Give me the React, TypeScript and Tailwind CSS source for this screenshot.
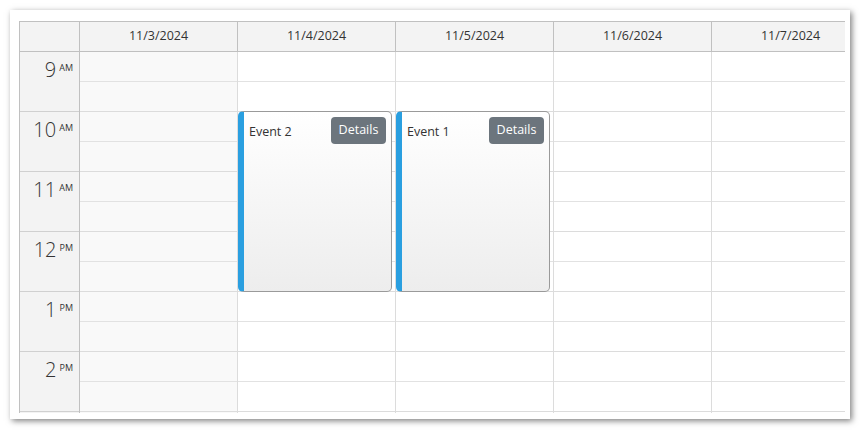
import React from "react";

type Day = { label: string; weekend?: boolean };
type CalEvent = { day: number; text: string; start: number; hours: number };

const days: Day[] = [
  { label: "11/3/2024", weekend: true },
  { label: "11/4/2024" },
  { label: "11/5/2024" },
  { label: "11/6/2024" },
  { label: "11/7/2024" },
];

// last row is only partly visible (cut by the scroll area), so no label there
const hours = [
  { h: "9", p: "AM" },
  { h: "10", p: "AM" },
  { h: "11", p: "AM" },
  { h: "12", p: "PM" },
  { h: "1", p: "PM" },
  { h: "2", p: "PM" },
  { h: "", p: "" },
];

const events: CalEvent[] = [
  { day: 1, text: "Event 2", start: 1, hours: 3 },
  { day: 2, text: "Event 1", start: 1, hours: 3 },
];

function EventBox({ ev }: { ev: CalEvent }) {
  return (
    <div
      className="absolute left-0 w-[154px] rounded-[5px] border border-[#9a9a9a] border-l-[6px] border-l-[#2a9fe0] bg-gradient-to-b from-white to-[#ededed] flex items-start justify-between pl-[5px] pr-[5px] pt-[5px]"
      style={{ top: ev.start * 60 - 1, height: ev.hours * 60 + 1 }}
    >
      <span className="mt-[9px] text-[12.5px] leading-none text-[#333]">{ev.text}</span>
      <button className="w-[55px] h-[27px] rounded-[4px] bg-[#6c757d] text-white text-[12.5px] leading-none">
        Details
      </button>
    </div>
  );
}

export default function App() {
  return (
    <div
      className="w-[860px] h-[430px] bg-white pt-[10px] pl-[10px]"
      style={{ fontFamily: '"Open Sans", "Noto Sans", sans-serif' }}
    >
      <div className="w-[840px] h-[409px] bg-white shadow-[2px_2px_6px_rgba(0,0,0,0.5)] pl-[9px] pt-[11px]">
        <div className="w-[826px] h-[392px] overflow-hidden border-l border-t border-[#c0c0c0]">
          {/* header */}
          <div className="flex w-max">
            <div className="w-[60px] h-[30px] shrink-0 bg-[#f3f3f3] border-r border-b border-[#c0c0c0]" />
            {days.map((d) => (
              <div
                key={d.label}
                className="w-[158px] h-[30px] shrink-0 bg-[#f3f3f3] border-r border-b border-[#c0c0c0] flex items-center justify-center text-[12.5px] text-[#333]"
              >
                {d.label}
              </div>
            ))}
          </div>

          {/* body */}
          <div className="flex w-max">
            <div className="w-[60px] shrink-0 bg-[#f3f3f3] border-r border-[#c0c0c0]">
              {hours.map((hr, i) => (
                <div
                  key={i}
                  className="h-[60px] border-b border-[#d0d0d0] flex justify-end items-start pr-[6px] pt-[8px] text-[#333]"
                >
                  <span className="text-[20px] font-light leading-none">{hr.h}</span>
                  <span className="text-[9px] leading-none ml-[3px] mt-[3px]">{hr.p}</span>
                </div>
              ))}
            </div>
            {days.map((d, i) => (
              <div
                key={d.label}
                className={
                  "relative w-[158px] shrink-0 border-r border-[#dcdcdc] " +
                  (d.weekend ? "bg-[#f9f9f9]" : "bg-white")
                }
              >
                {hours.map((_, r) => (
                  <div key={r}>
                    <div className="h-[30px] border-b border-[#e2e2e2]" />
                    <div className="h-[30px] border-b border-[#dcdcdc]" />
                  </div>
                ))}
                {events
                  .filter((e) => e.day === i)
                  .map((e) => (
                    <EventBox key={e.text} ev={e} />
                  ))}
              </div>
            ))}
          </div>
        </div>
      </div>
    </div>
  );
}
